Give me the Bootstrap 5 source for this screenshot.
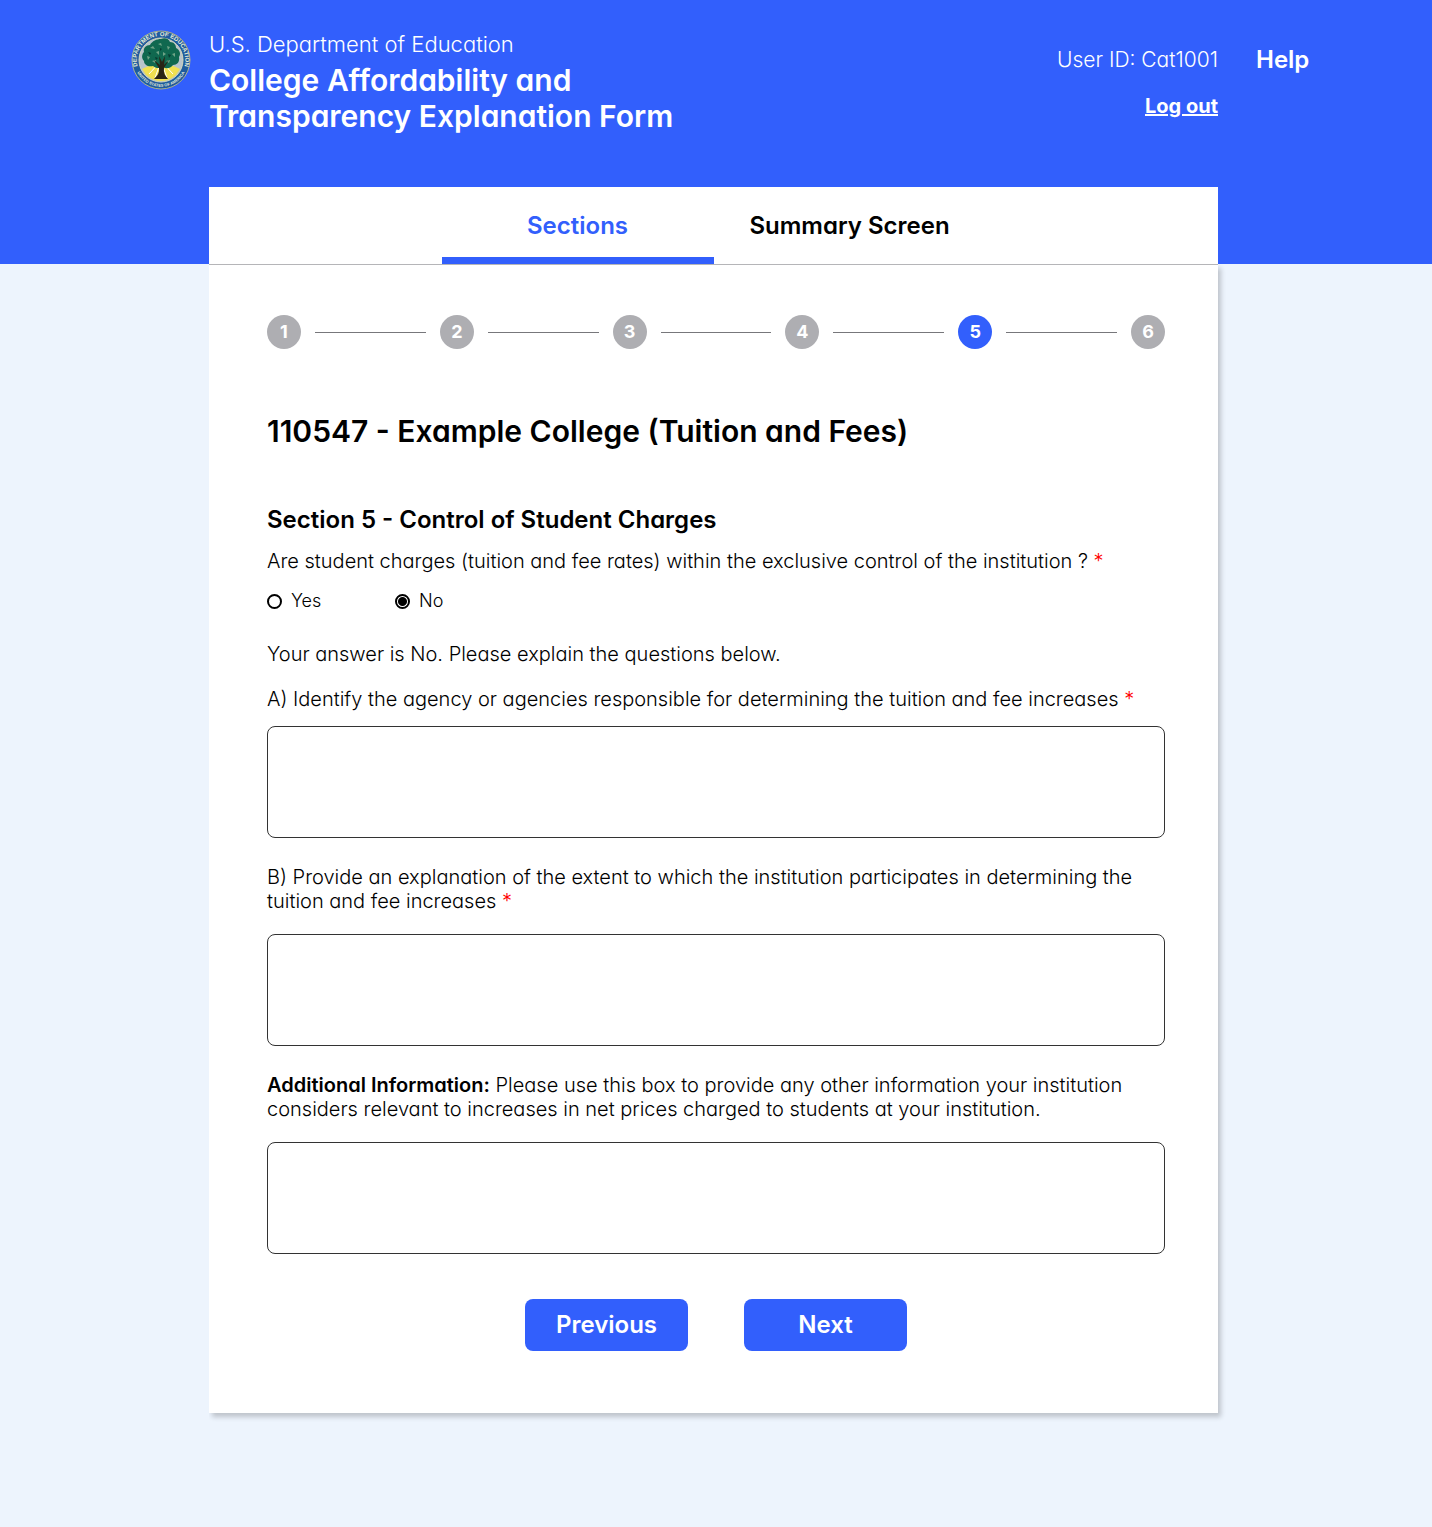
<!DOCTYPE html>
<html lang="en">
<head>
<meta charset="utf-8">
<meta name="viewport" content="width=device-width, initial-scale=1">
<title>College Affordability and Transparency Explanation Form</title>
<link href="https://cdn.jsdelivr.net/npm/bootstrap@5.3.0/dist/css/bootstrap.min.css" rel="stylesheet">
<style>
  :root { --brand: #325ffc; --page: #edf4fd; }
  body { background: var(--page); color: #000; font-family: Inter, "Open Sans", sans-serif; font-feature-settings: "cv11"; font-size: 20px; line-height: 24px; font-weight: 300; }
  .site-header { background: var(--brand); }
  .frame { display: grid; grid-template-columns: minmax(0, 1fr) minmax(0, 1009px) minmax(0, 1fr); padding-right: 5px; }
  .frame > .middle { grid-column: 2; }
  .masthead { min-height: 187px; padding-top: 30px; }
  .seal { width: 60px; height: 60px; margin-right: 18px; overflow: visible; }
  .agency { font-size: 22px; line-height: 28px; }
  .form-name { font-size: 30px; line-height: 36px; font-weight: 600; margin-top: 4px; }
  .user-id { font-size: 21px; line-height: 28px; }
  .help { font-size: 24px; line-height: 28px; font-weight: 600; margin-left: 38px; }
  .tabs { background: #fff; }
  .tab { width: 272px; height: 77px; font-size: 24px; line-height: 30px; font-weight: 600; color: #000; border-radius: 0; padding: 24px 0 0; border-bottom: 7px solid transparent; }
  .tab.active { color: var(--brand); border-color: var(--brand); }
  .sheet { background: #fff; border-top: 1px solid #b5b5b8; padding: 50px 53px 62px 58px; box-shadow: 3px 4px 5px rgba(0, 0, 0, .2); clip-path: inset(0 -12px -12px 0); }
  .step-dot { width: 34px; height: 34px; background: #aeaeb2; color: #fff; font-size: 18px; font-weight: 700; }
  .step-dot.current { background: var(--brand); }
  .step-line { height: 1px; background: #77777b; margin: 0 14px; }
  .college { font-size: 30px; line-height: 36px; font-weight: 600; margin: 64px 0 56px; }
  .section-title { font-size: 24px; line-height: 30px; font-weight: 600; margin: 0 0 14px; }
  .question { font-size: 20px; line-height: 24px; }
  .req { color: #f00; }
  .choice { font-size: 18px; width: 128px; }
  .choice input { appearance: none; width: 15px; height: 15px; border: 2px solid #000; border-radius: 50%; margin: 0 9px 0 0; }
  .choice input:checked { background: radial-gradient(circle, #000 4px, #fff 5px); }
  .note { margin: 29px 0 21px; }
  .prompt { margin-bottom: 21px; }
  .prompt-short { margin-bottom: 15px; }
  .prompt strong { font-weight: 600; }
  .answer { height: 112px; border: 1px solid #333; border-radius: 8px; resize: none; margin-bottom: 27px; }
  .actions { gap: 56px; margin-top: 45px; }
  .action { width: 163px; height: 52px; background: var(--brand); color: #fff; font-size: 24px; font-weight: 600; border: 0; border-radius: 8px; }
  .action:hover { background: #204bdc; color: #fff; }
</style>
<script defer src="https://cdn.jsdelivr.net/npm/bootstrap@5.3.0/dist/js/bootstrap.bundle.min.js"></script>
</head>
<body>
<header class="site-header">
  <div class="frame masthead text-white">
    <div class="text-end">
      <svg class="seal" viewBox="0 0 60 60" role="img" aria-label="Department of Education seal">
        <defs>
          <path id="arcTop" d="M6.5 36A24.2 24.2 0 1 1 53.5 36"/>
          <path id="arcLow" d="M4.5 38A26.7 26.7 0 0 0 55.5 38"/>
        </defs>
        <circle cx="30" cy="30" r="29" fill="#1f5c9e" stroke="#a9b38c" stroke-width="1"/>
        <circle cx="30" cy="30" r="22" fill="#b8c4cc" stroke="#d5d9bb" stroke-width="1"/>
        <path d="M11 39q19-10 38 0l-4 6q-7 6-15 6t-15-6z" fill="#f0e050"/>
        <path d="M30 31l-12 13m12-13l12 13M30 31l-6 17m6-17l6 17" stroke="#fff" stroke-width="1"/>
        <path d="M30 9c4-2 8 0 9 3 4 0 6 3 6 6 4 2 5 6 3 9 1 5-2 8-6 8-3 4-7 4-10 2-4 2-8 1-10-1-5 1-9-1-9-5-3-3-2-7 0-9-1-4 2-7 6-7 2-4 7-6 11-6z" fill="#10684f"/>
        <path d="M19 18l3-2 2 3zm8-4l3-1 1 3zm9 2l3 1-2 3zm5 8l3-1 0 4zM16 26l3 1-2 3zm9-4l3-1 0 4zm7 0l3 2-3 2zM21 31l4-1-1 3zm14 0l4-1-1 3z" fill="#6fa386"/>
        <path d="M17 22l3 1-1 2zm12-4l2 1-2 2zm8 6l3 1-2 3zM24 27l3 1-2 2z" fill="#063b31"/>
        <path d="M28 26l1 9-6-5 5 8q1 6-5 11h14q-5-5-4-11l5-8-5 5 1-9-3 6z" fill="#2a2415"/>
        <g fill="#e5ecda" font-family="Liberation Sans, sans-serif" font-weight="700" aria-hidden="true">
          <text font-size="6"><textPath href="#arcTop" startOffset="50%" text-anchor="middle">DEPARTMENT OF EDUCATION</textPath></text>
          <text font-size="4"><textPath href="#arcLow" startOffset="50%" text-anchor="middle">UNITED STATES OF AMERICA</textPath></text>
        </g>
      </svg>
    </div>
    <div class="d-flex justify-content-between align-items-start">
      <div>
        <div class="agency">U.S. Department of Education</div>
        <h1 class="form-name mb-0">College Affordability and<br>Transparency Explanation Form</h1>
      </div>
      <div class="text-end pt-3">
        <div class="user-id">User ID: Cat1001</div>
        <a href="#" class="text-white fw-bold d-inline-block mt-3 pt-1">Log out</a>
      </div>
    </div>
    <div class="pt-3"><a href="#" class="help text-white text-decoration-none d-inline-block">Help</a></div>
  </div>
  <div class="frame">
    <nav class="middle tabs nav justify-content-center" aria-label="Form views">
      <a class="nav-link tab active text-center" href="#" aria-current="page">Sections</a>
      <a class="nav-link tab text-center" href="#">Summary Screen</a>
    </nav>
  </div>
</header>
<main class="frame pb-5">
  <form class="middle sheet">
    <div class="d-flex align-items-center">
      <span class="step-dot rounded-circle d-flex align-items-center justify-content-center">1</span><span class="step-line flex-grow-1"></span>
      <span class="step-dot rounded-circle d-flex align-items-center justify-content-center">2</span><span class="step-line flex-grow-1"></span>
      <span class="step-dot rounded-circle d-flex align-items-center justify-content-center">3</span><span class="step-line flex-grow-1"></span>
      <span class="step-dot rounded-circle d-flex align-items-center justify-content-center">4</span><span class="step-line flex-grow-1"></span>
      <span class="step-dot current rounded-circle d-flex align-items-center justify-content-center" aria-current="step">5</span><span class="step-line flex-grow-1"></span>
      <span class="step-dot rounded-circle d-flex align-items-center justify-content-center">6</span>
    </div>
    <h2 class="college">110547 - Example College (Tuition and Fees)</h2>
    <h3 class="section-title">Section 5 - Control of Student Charges</h3>
    <fieldset>
      <legend class="question mb-3">Are student charges (tuition and fee rates) within the exclusive control of the institution ? <span class="req">*</span></legend>
      <div class="d-flex">
        <label class="choice d-flex align-items-center" for="ctlYes"><input type="radio" id="ctlYes" name="control">Yes</label>
        <label class="choice d-flex align-items-center" for="ctlNo"><input type="radio" id="ctlNo" name="control" checked>No</label>
      </div>
    </fieldset>
    <p class="note">Your answer is No. Please explain the questions below.</p>
    <label class="prompt prompt-short d-block" for="agency">A) Identify the agency or agencies responsible for determining the tuition and fee increases <span class="req">*</span></label>
    <textarea class="answer form-control" id="agency"></textarea>
    <label class="prompt d-block" for="extent">B) Provide an explanation of the extent to which the institution participates in determining the tuition and fee increases <span class="req">*</span></label>
    <textarea class="answer form-control" id="extent"></textarea>
    <label class="prompt d-block" for="extra"><strong>Additional Information:</strong> Please use this box to provide any other information your institution considers relevant to increases in net prices charged to students at your institution.</label>
    <textarea class="answer form-control" id="extra"></textarea>
    <div class="actions d-flex justify-content-center">
      <button type="button" class="btn action">Previous</button>
      <button type="button" class="btn action">Next</button>
    </div>
  </form>
</main>
</body>
</html>
